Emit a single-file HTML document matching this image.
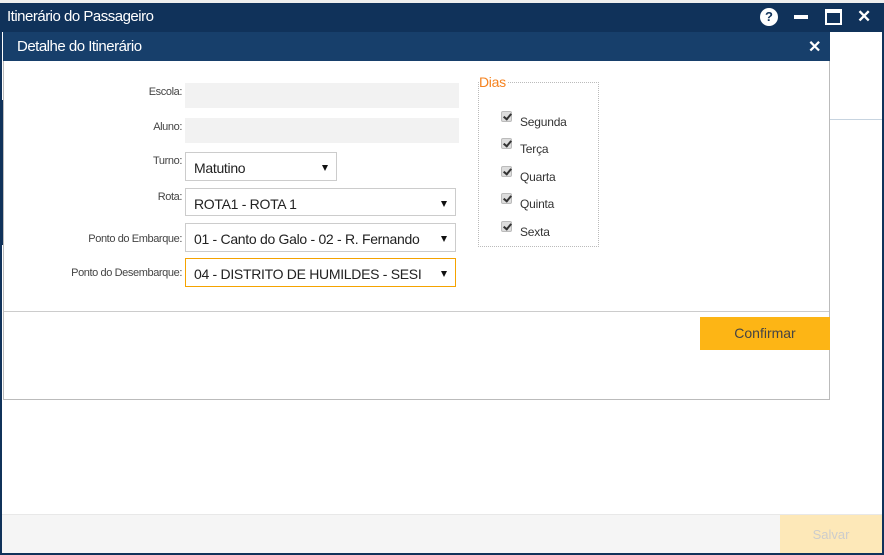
<!DOCTYPE html>
<html><head><meta charset="utf-8"><style>
*{box-sizing:border-box;margin:0;padding:0}
body{width:884px;height:555px;position:relative;background:#fff;font-family:"Liberation Sans",sans-serif;overflow:hidden}
.abs{position:absolute}
.lbl{position:absolute;font-size:11px;color:#444;text-align:right;width:180px;left:2px;letter-spacing:-0.4px}
.in{position:absolute;background:#f2f2f2}
.sel{position:absolute;border:1px solid #ccc;background:#fff;font-size:14px;color:#222;padding:7px 0 0 8px;white-space:nowrap;overflow:hidden;letter-spacing:-0.3px}
.sel:after{content:"";position:absolute;right:8px;top:12px;border-left:3.5px solid transparent;border-right:3.5px solid transparent;border-top:6px solid #111}
.sel span{display:block;overflow:hidden}
.cb{position:absolute;left:501px;width:11px;height:11px;background:#ddd;border:1px solid #bbb;border-radius:2px}
.cb:after{content:"";position:absolute;left:3px;top:0px;width:3px;height:6px;border:solid #333;border-width:0 2px 2px 0;transform:rotate(40deg)}
.ct{position:absolute;left:520px;font-size:12px;color:#333;letter-spacing:-0.2px}
</style></head><body>
<div class="abs" style="left:0;top:0;width:884px;height:3px;background:#eee"></div>
<div class="abs" style="left:0;top:3px;width:884px;height:552px;border:2px solid #10325a;border-top:none;background:#fff"></div>
<div class="abs" style="left:0;top:3px;width:884px;height:29px;background:#10325a"></div>
<div class="abs" style="left:7px;top:8px;color:#fff;font-size:15px;letter-spacing:-0.5px">Itinerário do Passageiro</div>
<div class="abs" style="left:760px;top:8px;width:18px;height:18px;border-radius:50%;background:#fff;color:#10325a;font-weight:bold;font-size:13px;text-align:center;line-height:18px">?</div>
<div class="abs" style="left:794px;top:15px;width:14px;height:4px;background:#fff"></div>
<div class="abs" style="left:825px;top:9px;width:17px;height:16px;border:2px solid #fff;border-top-width:4px"></div>
<div class="abs" style="left:857px;top:7px;color:#fff;font-weight:bold;font-size:17px">✕</div>
<div class="abs" style="left:0;top:100px;width:3px;height:145px;background:#10325a"></div>
<div class="abs" style="left:830px;top:119px;width:52px;height:1px;background:#c7d4e0"></div>
<div class="abs" style="left:2px;top:514px;width:880px;height:39px;background:#f5f5f5;border-top:1px solid #e8e8e8"></div>
<div class="abs" style="left:780px;top:515px;width:102px;height:38px;background:#fde8b8;color:#ccc;font-size:13px;text-align:center;line-height:40px">Salvar</div>
<div class="abs" style="left:3px;top:32px;width:827px;height:368px;border:1px solid #bbb;background:#fff"></div>
<div class="abs" style="left:3px;top:32px;width:827px;height:29px;background:#173f6b"></div>
<div class="abs" style="left:17px;top:38px;color:#fff;font-size:15px;letter-spacing:-0.5px">Detalhe do Itinerário</div>
<div class="abs" style="left:808px;top:37px;color:#fff;font-weight:bold;font-size:16px">✕</div>
<div class="lbl" style="top:86px">Escola:</div>
<div class="in" style="left:185px;top:83px;width:274px;height:25px"></div>
<div class="lbl" style="top:121px">Aluno:</div>
<div class="in" style="left:185px;top:118px;width:274px;height:25px"></div>
<div class="lbl" style="top:155px">Turno:</div>
<div class="sel" style="left:185px;top:152px;width:152px;height:29px"><span>Matutino</span></div>
<div class="lbl" style="top:191px">Rota:</div>
<div class="sel" style="left:185px;top:188px;width:271px;height:28px"><span>ROTA1 - ROTA 1</span></div>
<div class="lbl" style="top:233px">Ponto do Embarque:</div>
<div class="sel" style="left:185px;top:223px;width:271px;height:29px"><span style="width:240px">01 - Canto do Galo - 02 - R. Fernando</span></div>
<div class="lbl" style="top:267px">Ponto do Desembarque:</div>
<div class="sel" style="left:185px;top:258px;width:271px;height:29px;border-color:#f5a300"><span>04 - DISTRITO DE HUMILDES - SESI</span></div>
<div class="abs" style="left:478px;top:82px;width:121px;height:165px;border:1px dotted #bbb"></div>
<div class="abs" style="left:479px;top:74px;background:#fff;color:#f5821f;font-size:14px;padding-right:2px;letter-spacing:-0.3px">Dias</div>
<div class="cb" style="top:111px"></div><div class="ct" style="top:115px">Segunda</div>
<div class="cb" style="top:138px"></div><div class="ct" style="top:142px">Terça</div>
<div class="cb" style="top:166px"></div><div class="ct" style="top:170px">Quarta</div>
<div class="cb" style="top:193px"></div><div class="ct" style="top:197px">Quinta</div>
<div class="cb" style="top:221px"></div><div class="ct" style="top:225px">Sexta</div>
<div class="abs" style="left:4px;top:311px;width:825px;height:1px;background:#ccc"></div>
<div class="abs" style="left:700px;top:317px;width:130px;height:33px;background:#fdb515;color:#444;font-size:14px;text-align:center;line-height:33px">Confirmar</div>
</body></html>
